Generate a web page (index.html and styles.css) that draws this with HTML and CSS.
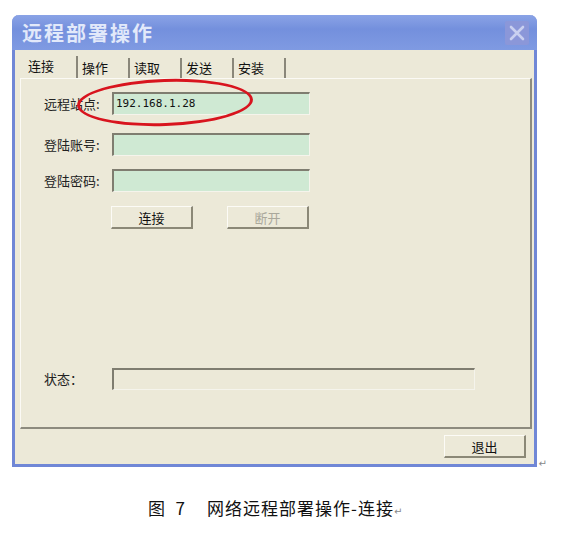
FILE: index.html
```html
<!DOCTYPE html>
<html lang="zh-CN">
<head>
  <meta charset="UTF-8" />
  <title>远程部署操作</title>
  <link rel="stylesheet" href="styles.css">
</head>
<body>
  <div class="window">
    <div class="titlebar">
      <span class="title">远程部署操作</span>
      <span class="close-btn">
        <svg width="18" height="18" viewBox="0 0 18 18"><path d="M3 3 L15 15 M15 3 L3 15" stroke="#c9d0f0" stroke-width="2.6" stroke-linecap="round"/></svg>
      </span>
    </div>
    <div class="win-body">
      <div class="tabs">
        <span class="tab active">连接</span>
        <span class="tab">操作</span>
        <span class="tab">读取</span>
        <span class="tab">发送</span>
        <span class="tab">安装</span>
      </div>
      <div class="panel">
        <div class="row row-first">
          <span class="label">远程站点:</span>
          <span class="field">192.168.1.28</span>
        </div>
        <div class="row row-2">
          <span class="label">登陆账号:</span>
          <span class="field"></span>
        </div>
        <div class="row row-3">
          <span class="label">登陆密码:</span>
          <span class="field"></span>
        </div>
        <div class="btn-row">
          <button class="btn">连接</button>
          <button class="btn disabled">断开</button>
        </div>
        <div class="row status-row">
          <span class="label">状态：</span>
          <span class="field status"></span>
        </div>
        <div class="mark"></div>
      </div>
      <div class="footer">
        <button class="btn">退出</button>
      </div>
    </div>
    <span class="ret ret-win">↵</span>
  </div>
  <p class="caption"><span class="fig">图&nbsp;&nbsp;7</span>网络远程部署操作-连接<span class="ret">↵</span></p>
</body>
</html>
```

FILE: styles.css
```css
body {
    margin: 0;
    background: #ffffff;
    font-family: "Noto Sans CJK SC", "DejaVu Sans", sans-serif;
    color: #111;
}
.window {
    position: relative;
    margin: 15px 0 0 12px;
    width: 525px;
    height: 452px;
    box-sizing: border-box;
    background: #ece9d8;
    border: 3px solid #7087d6;
    border-top: none;
    border-radius: 7px 7px 0 0;
    display: flex;
    flex-direction: column;
}
.titlebar {
    height: 35px;
    margin: 0 -3px;
    border-radius: 7px 7px 0 0;
    background: linear-gradient(#8aa3e6, #7490dd 40%, #7f9ae2);
    display: flex;
    align-items: center;
    justify-content: space-between;
    padding: 0 8px 0 10px;
}
.title {
    font-size: 20px;
    font-weight: bold;
    color: #e2e9fa;
    letter-spacing: 2px;
}
.close-btn {
    width: 24px;
    height: 24px;
    background: #8b97d9;
    border-radius: 2px;
    display: flex;
    align-items: center;
    justify-content: center;
}
.win-body {
    flex: 1;
    padding: 8px 2px 0 5px;
    display: flex;
    flex-direction: column;
}
.tabs {
    display: flex;
    height: 20px;
    padding-left: 2px;
    font-size: 13px;
    line-height: 20px;
}
.tab {
    width: 52px;
    padding-left: 4px;
    box-sizing: border-box;
    border-right: 2px solid #8a877a;
}
.tab.active {
    width: 56px;
    padding-left: 6px;
    margin-top: -2px;
}
.panel {
    position: relative;
    height: 351px;
    box-sizing: border-box;
    border-top: 1px solid #fbfaf5;
    border-left: 1px solid #fbfaf5;
    border-right: 2px solid #8d8b7e;
    border-bottom: 2px solid #8d8b7e;
    padding: 13px 0 0 23px;
    font-size: 13px;
}
.row {
    display: flex;
    align-items: center;
}
.row-2 { margin-top: 18px; }
.row-3 { margin-top: 13px; }
.label {
    width: 68px;
    color: #222;
}
.field {
    width: 198px;
    height: 23px;
    box-sizing: border-box;
    background: #cfe9d3;
    border-top: 2px solid #7f7d70;
    border-left: 2px solid #7f7d70;
    border-right: 1px solid #f5f4ec;
    border-bottom: 1px solid #f5f4ec;
    font-family: "DejaVu Sans Mono", monospace;
    font-size: 11px;
    line-height: 20px;
    padding-left: 2px;
    color: #111;
}
.btn-row {
    display: flex;
    gap: 34px;
    margin-top: 14px;
    padding-left: 67px;
}
.btn {
    width: 82px;
    height: 23px;
    background: #ece9d8;
    border: none;
    border-top: 1px solid #fcfbf6;
    border-left: 1px solid #fcfbf6;
    border-right: 2px solid #8b8877;
    border-bottom: 2px solid #8b8877;
    font-family: "Noto Sans CJK SC", sans-serif;
    font-size: 13px;
    color: #111;
    padding: 0;
}
.btn.disabled {
    color: #aaa89c;
}
.status-row {
    margin-top: 139px;
}
.status-row .label {
    margin-top: -1px;
}
.status {
    width: 363px;
    height: 22px;
    background: #ece9d8;
}
.mark {
    position: absolute;
    left: 56px;
    top: 0;
    width: 170px;
    height: 41px;
    border: 3px solid #d8141e;
    border-radius: 50%;
    transform: rotate(-2deg);
}
.footer {
    display: flex;
    justify-content: flex-end;
    padding: 6px 6px 0 0;
}
.ret {
    font-size: 10px;
    color: #888;
}
.ret-win {
    position: absolute;
    right: -13px;
    bottom: -6px;
}
.caption {
    margin: 28px 0 0 148px;
    font-size: 17px;
    letter-spacing: 1px;
    color: #111;
}
.fig {
    display: inline-block;
    width: 59px;
}
```
